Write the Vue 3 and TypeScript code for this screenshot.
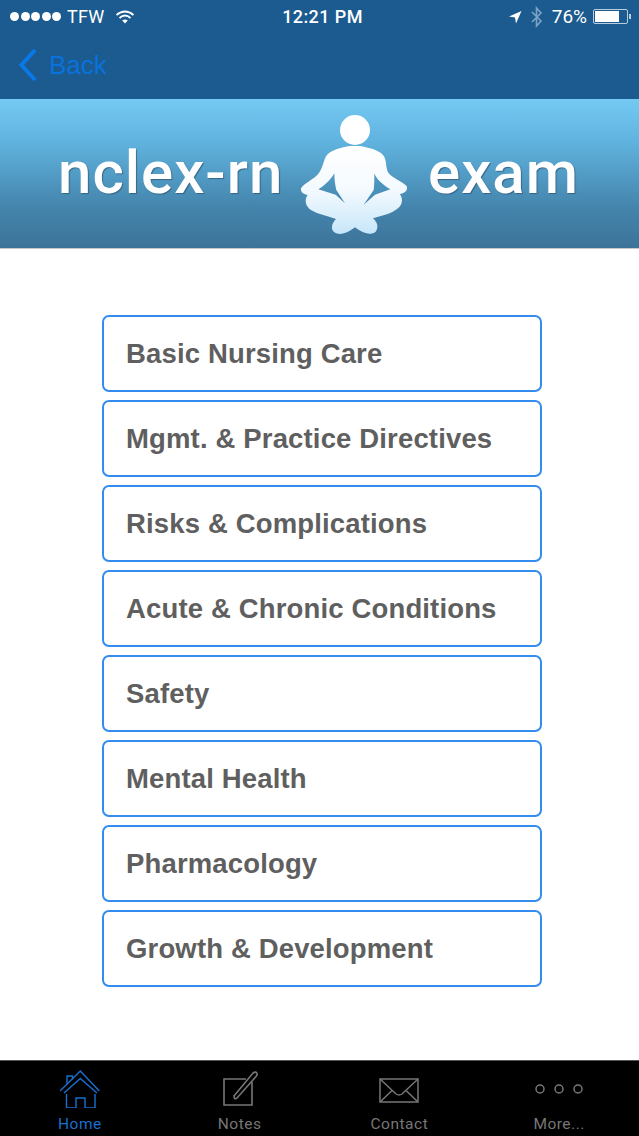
<script setup lang="ts">
const items: string[] = [
  'Basic Nursing Care',
  'Mgmt. & Practice Directives',
  'Risks & Complications',
  'Acute & Chronic Conditions',
  'Safety',
  'Mental Health',
  'Pharmacology',
  'Growth & Development',
]
</script>

<template>
  <div class="screen">
    <header class="head">
      <div class="status">
        <div class="st-left">
          <div class="dots"><i></i><i></i><i></i><i></i><i></i></div>
          <span class="carrier">TFW</span>
          <svg class="wifi" viewBox="0 0 20 14" width="20" height="14">
            <path d="M1.5 5 Q10 -2 18.5 5" fill="none" stroke="#fff" stroke-width="1.8" />
            <path d="M4.5 8 Q10 3 15.5 8" fill="none" stroke="#fff" stroke-width="1.8" />
            <path d="M7.2 10.6 Q10 8.2 12.8 10.6 L10 13.4 Z" fill="#fff" />
          </svg>
        </div>
        <div class="time">12:21 PM</div>
        <div class="st-right">
          <svg viewBox="0 0 14 14" width="14" height="14"><path d="M13.5 1 L1 6.6 L7 7.4 L8 13.5 Z" fill="#fff" /></svg>
          <svg class="bt" viewBox="0 0 14 22" width="14" height="22"><path d="M2 6 L11 15 L6.5 20 V2 L11 7 L2 16" fill="none" stroke="#7fa3c4" stroke-width="1.6" /></svg>
          <span class="pct">76%</span>
          <div class="battery"><div class="level"></div></div>
          <div class="nub"></div>
        </div>
      </div>
      <div class="nav">
        <svg viewBox="0 0 20 34" width="20" height="34"><path d="M17 2 L3.5 17 L17 32" fill="none" stroke="#0a78e6" stroke-width="4" /></svg>
        <span class="back">Back</span>
      </div>
    </header>

    <section class="banner">
      <span class="logo logo-a">nclex-rn</span>
      <svg class="figure" viewBox="0 0 360 390" width="120" height="130">
        <defs>
          <linearGradient id="fig" x1="0" y1="0" x2="0" y2="1">
            <stop offset="0" stop-color="#ffffff" />
            <stop offset="0.5" stop-color="#f4fafe" />
            <stop offset="1" stop-color="#c6e6fa" />
          </linearGradient>
        </defs>
        <circle cx="180" cy="60" r="45" fill="#fff" />
        <path fill="url(#fig)" fill-rule="evenodd" d="M165 108 C140 112 105 120 92 140 C82 165 82 178 66 196 C52 210 28 220 18 235 C16 248 28 254 38 255 C28 268 30 288 48 300 C70 314 100 318 123 327 C110 340 106 358 118 367 C135 378 160 368 180 352 C200 368 225 378 242 365 C252 352 247 337 234 325 C262 317 292 310 310 294 C324 282 324 264 314 252 C330 250 340 240 335 228 C322 214 292 204 280 188 C270 170 277 150 264 135 C250 118 215 112 195 108 Z M118 190 C108 208 90 226 70 238 L122 254 L150 280 L124 240 C120 224 118 208 118 190 Z M238 190 C244 208 266 226 286 238 L240 254 L206 284 L236 240 C238 224 238 208 238 190 Z" />
      </svg>
      <span class="logo">exam</span>
    </section>

    <main class="list">
      <button v-for="item in items" :key="item" class="item" type="button">{{ item }}</button>
    </main>

    <nav class="tabs">
      <div class="tab active">
        <svg viewBox="9 4 40 38" width="40" height="38" fill="none" stroke="#1a6fd0" stroke-width="1.4">
          <path d="M9 25 L29.3 5 L48.3 25" />
          <path d="M13 27 L29.3 12.5 L46 27" />
          <path d="M15.5 28 V42 H25 V32 H34 V42 H44 V28" />
          <path d="M16 18 V10 H21.5 V13.5" />
        </svg>
        <span>Home</span>
      </div>
      <div class="tab">
        <svg viewBox="0 0 40 38" width="40" height="38" fill="none" stroke="#777" stroke-width="1.6">
          <path d="M32 12 V35 H4 V9 H26" />
          <path d="M14 26 L33 3 Q36 1 37 3.5 Q37.5 5 36 6.5 L17 28 Q14 30 14 26 Z" />
        </svg>
        <span>Notes</span>
      </div>
      <div class="tab">
        <svg viewBox="0 0 40 38" width="40" height="38" fill="none" stroke="#777" stroke-width="1.5">
          <rect x="1" y="9" width="38" height="23" />
          <path d="M1 9 L17 24 Q20 26 23 24 L39 9" />
          <path d="M1 32 L13 20.5 M39 32 L27 20.5" />
        </svg>
        <span>Contact</span>
      </div>
      <div class="tab">
        <svg viewBox="0 0 48 38" width="48" height="38" fill="none" stroke="#777" stroke-width="1.5">
          <circle cx="5" cy="19" r="4" />
          <circle cx="24" cy="19" r="4" />
          <circle cx="43" cy="19" r="4" />
        </svg>
        <span>More...</span>
      </div>
    </nav>
  </div>
</template>

<style>
html, body { margin: 0; padding: 0; background: #fff; }
</style>

<style scoped>
.screen {
  width: 639px;
  height: 1136px;
  display: flex;
  flex-direction: column;
  font-family: "Liberation Sans", Arial, sans-serif;
  background: #fff;
  overflow: hidden;
}
.head { height: 99px; background: #1b5b90; flex: none; }
.status {
  height: 33px;
  display: grid;
  grid-template-columns: 1fr auto 1fr;
  align-items: center;
  color: #fff;
  font-size: 18px;
  font-family: Roboto, "Liberation Sans", sans-serif;
}
.st-left { display: flex; align-items: center; padding-left: 10px; }
.dots { display: flex; gap: 1.5px; }
.dots i { width: 9px; height: 9px; border-radius: 50%; background: #fff; display: block; }
.carrier { margin-left: 6px; letter-spacing: 0.3px; }
.wifi { margin-left: 10px; }
.time { font-weight: 500; letter-spacing: 0.4px; transform: translateX(3px); }
.st-right { display: flex; align-items: center; justify-content: flex-end; padding-right: 8px; }
.bt { margin-left: 8px; }
.pct { margin-left: 8px; font-size: 19px; }
.battery {
  width: 35px;
  height: 15px;
  margin-left: 6px;
  box-sizing: border-box;
  border: 1px solid #b9cde0;
  border-radius: 2px;
  padding: 1px;
}
.level { width: 76%; height: 100%; background: #fff; }
.nub { width: 2px; height: 5px; background: #b9cde0; margin-left: 1px; }
.nav {
  height: 66px;
  display: flex;
  align-items: center;
  padding-left: 18px;
  box-sizing: border-box;
  padding-bottom: 2px;
}
.back { color: #0a72dc; font-size: 26px; margin-left: 11px; }
.banner {
  height: 150px;
  flex: none;
  box-sizing: border-box;
  background: linear-gradient(#74c9f3 0%, #5fb2dd 30%, #4485ad 72%, #3d7399 100%);
  border-bottom: 1px solid #c8c8c8;
  display: flex;
  align-items: center;
  gap: 13px;
  padding: 2px 0 0 58px;
}
.logo {
  color: #fff;
  font-family: Roboto, "Open Sans", sans-serif;
  font-weight: 500;
  font-size: 60px;
  letter-spacing: 1px;
  line-height: 1;
  text-shadow: 1px 1px 1px rgba(40, 70, 100, 0.6);
  margin-top: -4px;
  white-space: nowrap;
}
.logo-a { width: 224px; }
.figure { flex: none; }
.list {
  flex: 1;
  display: flex;
  flex-direction: column;
  gap: 8px;
  padding: 66px 0 0 102px;
}
.item {
  width: 440px;
  height: 77px;
  box-sizing: border-box;
  flex: none;
  border: 2px solid #348cee;
  border-radius: 7px;
  background: #fff;
  color: #5f5f5f;
  font-family: "Liberation Sans", Arial, sans-serif;
  font-weight: 700;
  font-size: 27.5px;
  letter-spacing: 0.15px;
  text-align: left;
  padding: 0 0 0 22px;
}
.tabs {
  height: 76px;
  flex: none;
  box-sizing: border-box;
  background: #000;
  border-top: 1px solid #555;
  display: grid;
  grid-template-columns: repeat(4, 1fr);
}
.tab {
  display: flex;
  flex-direction: column;
  align-items: center;
  color: #777;
  font-size: 15.5px;
  letter-spacing: 0.5px;
  padding-top: 9px;
  gap: 7px;
  font-family: Roboto, "Liberation Sans", sans-serif;
}
.tab span { line-height: 18px; }
.tab.active { color: #1a6fd0; }
</style>
